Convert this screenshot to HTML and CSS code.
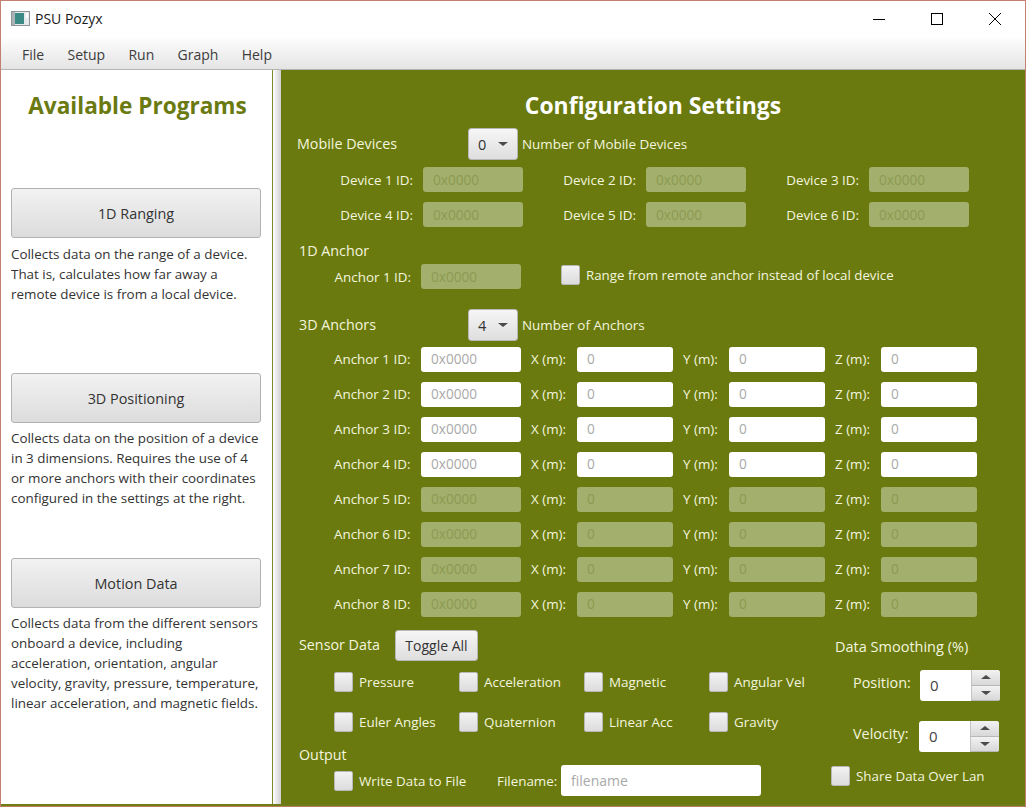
FILE: index.html
```html
<!DOCTYPE html>
<html lang="en">
<head>
<meta charset="UTF-8" />
<title>PSU Pozyx</title>
<link rel="stylesheet" href="styles.css">
</head>
<body>
  <div class="window">
    <div class="titlebar">
      <svg class="app-icon" width="19" height="15" viewBox="0 0 19 15">
        <rect x="0.5" y="0.5" width="18" height="14" fill="#e6e9eb" stroke="#8d9498"/>
        <rect x="1" y="1" width="3" height="13" fill="#aab2b6"/>
        <rect x="4" y="2" width="9" height="11" fill="#3c8a86"/>
        <rect x="15" y="2" width="2" height="5" fill="#fff"/>
      </svg>
      <span class="app-name">PSU Pozyx</span>
      <div class="win-buttons">
        <svg width="14" height="14" viewBox="0 0 14 14"><path d="M1 7.5H13" stroke="#000" fill="none"/></svg>
        <svg width="14" height="14" viewBox="0 0 14 14"><rect x="1.5" y="1.5" width="11" height="11" stroke="#000" fill="none"/></svg>
        <svg width="14" height="14" viewBox="0 0 14 14"><path d="M1 1L13 13M13 1L1 13" stroke="#000" fill="none"/></svg>
      </div>
    </div>
    <div class="menubar">
      <span>File</span>
      <span>Setup</span>
      <span>Run</span>
      <span>Graph</span>
      <span>Help</span>
    </div>

    <div class="content">
      <div class="sidebar">
        <h2>Available Programs</h2>

        <div class="program">
          <button class="program-btn">1D Ranging</button>
          <p>Collects data on the range of a device.<br>That is, calculates how far away a<br>remote device is from a local device.</p>
        </div>
        <div class="program">
          <button class="program-btn">3D Positioning</button>
          <p>Collects data on the position of a device<br>in 3 dimensions. Requires the use of 4<br>or more anchors with their coordinates<br>configured in the settings at the right.</p>
        </div>
        <div class="program">
          <button class="program-btn">Motion Data</button>
          <p>Collects data from the different sensors<br>onboard a device, including<br>acceleration, orientation, angular<br>velocity, gravity, pressure, temperature,<br>linear acceleration, and magnetic fields.</p>
        </div>
      </div>

      <div class="divider"></div>

      <div class="settings">
        <h1>Configuration Settings</h1>

        <div class="count-row">
          <span class="count-label mobile">Mobile Devices</span>
          <span class="combo">0<i class="arrow"></i></span>
          <span>Number of Mobile Devices</span>
        </div>

        <div class="device-grid">
          <div class="field"><label>Device 1 ID:</label><span class="input off">0x0000</span></div>
          <div class="field"><label>Device 2 ID:</label><span class="input off">0x0000</span></div>
          <div class="field"><label>Device 3 ID:</label><span class="input off">0x0000</span></div>
          <div class="field"><label>Device 4 ID:</label><span class="input off">0x0000</span></div>
          <div class="field"><label>Device 5 ID:</label><span class="input off">0x0000</span></div>
          <div class="field"><label>Device 6 ID:</label><span class="input off">0x0000</span></div>
        </div>

        <div class="heading anchor-1d">1D Anchor</div>
        <div class="anchor-1d-row">
          <div class="field"><label>Anchor 1 ID:</label><span class="input off">0x0000</span></div>
          <span class="check"><i class="box"></i>Range from remote anchor instead of local device</span>
        </div>

        <div class="count-row anchors-count">
          <span class="count-label">3D Anchors</span>
          <span class="combo">4<i class="arrow"></i></span>
          <span>Number of Anchors</span>
        </div>

        <div class="anchor-grid">
          <label>Anchor 1 ID:</label><span class="input">0x0000</span><label>X (m):</label><span class="input">0</span><label>Y (m):</label><span class="input">0</span><label>Z (m):</label><span class="input">0</span>
          <label>Anchor 2 ID:</label><span class="input">0x0000</span><label>X (m):</label><span class="input">0</span><label>Y (m):</label><span class="input">0</span><label>Z (m):</label><span class="input">0</span>
          <label>Anchor 3 ID:</label><span class="input">0x0000</span><label>X (m):</label><span class="input">0</span><label>Y (m):</label><span class="input">0</span><label>Z (m):</label><span class="input">0</span>
          <label>Anchor 4 ID:</label><span class="input">0x0000</span><label>X (m):</label><span class="input">0</span><label>Y (m):</label><span class="input">0</span><label>Z (m):</label><span class="input">0</span>
          <label>Anchor 5 ID:</label><span class="input off">0x0000</span><label>X (m):</label><span class="input off">0</span><label>Y (m):</label><span class="input off">0</span><label>Z (m):</label><span class="input off">0</span>
          <label>Anchor 6 ID:</label><span class="input off">0x0000</span><label>X (m):</label><span class="input off">0</span><label>Y (m):</label><span class="input off">0</span><label>Z (m):</label><span class="input off">0</span>
          <label>Anchor 7 ID:</label><span class="input off">0x0000</span><label>X (m):</label><span class="input off">0</span><label>Y (m):</label><span class="input off">0</span><label>Z (m):</label><span class="input off">0</span>
          <label>Anchor 8 ID:</label><span class="input off">0x0000</span><label>X (m):</label><span class="input off">0</span><label>Y (m):</label><span class="input off">0</span><label>Z (m):</label><span class="input off">0</span>
        </div>

        <div class="bottom">
          <div class="bottom-left">
            <div class="sensor-head">
              <span class="heading sensor-title">Sensor Data</span>
              <button class="toggle-btn">Toggle All</button>
            </div>
            <div class="sensor-grid">
              <span class="check"><i class="box"></i>Pressure</span>
              <span class="check"><i class="box"></i>Acceleration</span>
              <span class="check"><i class="box"></i>Magnetic</span>
              <span class="check"><i class="box"></i>Angular Vel</span>
              <span class="check"><i class="box"></i>Euler Angles</span>
              <span class="check"><i class="box"></i>Quaternion</span>
              <span class="check"><i class="box"></i>Linear Acc</span>
              <span class="check"><i class="box"></i>Gravity</span>
            </div>
            <div class="heading output-title">Output</div>
            <div class="output-row">
              <span class="check write-check"><i class="box"></i>Write Data to File</span>
              <label>Filename:</label>
              <span class="input filename">filename</span>
            </div>
          </div>

          <div class="bottom-right">
            <div class="smooth-title">Data Smoothing (%)</div>
            <div class="smooth-row position">
              <label>Position:</label>
              <span class="spinner">
                <span class="spin-value">0</span>
                <span class="spin-btns"><span><i class="up"></i></span><span><i class="arrow"></i></span></span>
              </span>
            </div>
            <div class="smooth-row velocity">
              <label>Velocity:</label>
              <span class="spinner">
                <span class="spin-value">0</span>
                <span class="spin-btns"><span><i class="up"></i></span><span><i class="arrow"></i></span></span>
              </span>
            </div>
            <span class="check share"><i class="box"></i>Share Data Over Lan</span>
          </div>
        </div>
      </div>
    </div>
  </div>
</body>
</html>
```

FILE: styles.css
```css
* {
  box-sizing: border-box;
}
body {
  margin: 0;
  font-family: "Open Sans", "Noto Sans", sans-serif;
  font-size: 13.4px;
  background: #fff;
}

.window {
  width: 1026px;
  height: 807px;
  border: 1px solid #c57f6e;
  border-bottom-color: #b5805a;
  display: flex;
  flex-direction: column;
  overflow: hidden;
}

.titlebar {
  height: 37px;
  flex: none;
  display: flex;
  align-items: center;
  background: #fff;
  padding: 0 0 2px 10px;
  color: #1a1a1a;
  font-size: 14px;
}
.app-icon {
  margin-right: 5px;
}
.win-buttons {
  margin-left: auto;
  display: flex;
  gap: 44px;
  padding-right: 23px;
}
.win-buttons svg {
  display: block;
}

.menubar {
  height: 32px;
  flex: none;
  display: flex;
  align-items: center;
  gap: 23.3px;
  padding: 2px 0 0 21px;
  background: linear-gradient(#fdfdfd, #e4e4e4);
  border-bottom: 1px solid #b4b4b4;
  color: #3c3c3c;
  font-size: 14px;
}

.content {
  flex: 1;
  display: flex;
  min-height: 0;
  border-bottom: 2px solid #6f7d18;
}

.sidebar {
  width: 271px;
  flex: none;
  background: #fff;
  padding: 0 10px;
  color: #333;
}
.sidebar h2 {
  margin: 20px 0 66px;
  padding-left: 2px;
  height: 32px;
  line-height: 32px;
  text-align: center;
  font-size: 22.6px;
  font-weight: 700;
  color: #6a7a10;
}
.program {
  height: 185px;
}
.program-btn {
  display: block;
  width: 250px;
  height: 50px;
  border: 1px solid #b2b2b2;
  border-radius: 3px;
  background: linear-gradient(#f2f2f2, #dcdcdc);
  color: #333;
  font-family: inherit;
  font-size: 14.4px;
}
.program p {
  margin: 6px 0 0;
  line-height: 20px;
  font-size: 13.4px;
}
.program + .program p {
  margin-top: 5px;
}

.divider {
  width: 9px;
  flex: none;
  border-left: 1px solid #7c8a2c;
  background: linear-gradient(90deg, #fff, #cfcfcf);
}

.settings {
  flex: 1;
  background: #6a7a0e;
  padding-left: 16px;
  color: #f3f5df;
}
.settings h1 {
  margin: 20px 0 6px;
  height: 32px;
  line-height: 32px;
  text-align: center;
  font-size: 22.9px;
  font-weight: 700;
  color: #fff;
  padding-right: 16px;
}

.count-row {
  display: flex;
  align-items: center;
  height: 32px;
}
.count-label {
  width: 171px;
  padding: 0 0 2px 2px;
  font-size: 14.3px;
}
.count-label.mobile {
  padding-left: 0;
}
.combo {
  width: 50px;
  height: 32px;
  margin-right: 4px;
  display: flex;
  align-items: center;
  justify-content: space-between;
  padding: 0 9px;
  border: 1px solid #b8b8b8;
  border-radius: 3px;
  background: linear-gradient(#f6f6f6, #dedede);
  color: #333;
  font-size: 14.5px;
}
.arrow {
  width: 0;
  height: 0;
  border-left: 5px solid transparent;
  border-right: 5px solid transparent;
  border-top: 4.5px solid #4a4a4a;
}
.up {
  width: 0;
  height: 0;
  border-left: 5px solid transparent;
  border-right: 5px solid transparent;
  border-bottom: 4.5px solid #4a4a4a;
}

.input {
  display: flex;
  align-items: center;
  height: 25px;
  padding: 0 0 1px 10px;
  background: #fff;
  border-radius: 3px;
  color: #a9a9a9;
  font-size: 13.6px;
}
.input.off {
  background: #a3af6c;
  color: #8c9a52;
}

.field {
  display: flex;
  align-items: center;
  gap: 10px;
}
.field label {
  text-align: right;
  white-space: nowrap;
}
.field .input {
  width: 100px;
}

.device-grid {
  display: grid;
  grid-template-columns: repeat(3, 183px);
  column-gap: 40px;
  row-gap: 10px;
  margin-top: 7px;
  padding-left: 43px;
}
.device-grid label {
  width: 73px;
}

.heading {
  font-size: 14.3px;
  line-height: 20px;
}
.anchor-1d {
  margin: 14px 0 3px;
  padding-left: 2px;
}
.anchor-1d-row {
  display: flex;
  align-items: flex-start;
  gap: 40px;
  padding-left: 37px;
}
.anchor-1d-row label {
  width: 77px;
}
.anchor-1d-row .check {
  margin-top: 1px;
  font-size: 13.3px;
}
.check {
  display: flex;
  align-items: center;
  white-space: nowrap;
}
.box {
  width: 19px;
  height: 20px;
  margin-right: 6px;
  flex: none;
  border: 1px solid #b8b8b8;
  border-radius: 2px;
  background: linear-gradient(#f2f2f2, #dcdcdc);
}

.anchors-count {
  margin-top: 20px;
}
.anchor-grid {
  display: grid;
  grid-template-columns: 124px 100px 56px 96px 56px 96px 56px 96px;
  row-gap: 10px;
  margin-top: 6px;
  align-items: center;
}
.anchor-grid label {
  white-space: nowrap;
  padding: 0 0 2px 10px;
}
.anchor-grid label:nth-child(8n+1) {
  padding-left: 37px;
}
.anchor-grid .input {
  padding-bottom: 2px;
}

.bottom {
  display: flex;
  margin-top: 13px;
}
.bottom-left {
  width: 534px;
  flex: none;
}
.sensor-head {
  display: flex;
  align-items: center;
  height: 31px;
}
.sensor-title {
  width: 98px;
  padding: 0 0 2px 2px;
}
.toggle-btn {
  width: 83px;
  height: 31px;
  border: 1px solid #b8b8b8;
  border-radius: 3px;
  background: linear-gradient(#f6f6f6, #dedede);
  color: #333;
  font-family: inherit;
  font-size: 14px;
  padding: 0;
}
.sensor-grid {
  display: grid;
  grid-template-columns: repeat(4, 125px);
  grid-auto-rows: 20px;
  row-gap: 20px;
  margin-top: 11px;
  padding-left: 37px;
}
.output-title {
  margin-top: 13px;
  padding-left: 2px;
}
.output-row {
  display: flex;
  align-items: center;
  height: 31px;
  padding-left: 37px;
}
.write-check {
  width: 163px;
}
.output-row label {
  width: 59px;
  margin-right: 5px;
  white-space: nowrap;
}
.filename {
  width: 200px;
  height: 31px;
  font-size: 14px;
}

.bottom-right {
  padding-top: 7px;
}
.smooth-title {
  font-size: 14.5px;
  line-height: 20px;
  padding-left: 4px;
}
.smooth-row {
  display: flex;
  align-items: center;
  font-size: 14.4px;
}
.smooth-row label {
  width: 67px;
  padding-bottom: 7px;
}
.smooth-row.position {
  margin-top: 13px;
  padding-left: 22px;
}
.smooth-row.velocity {
  margin-top: 20px;
  padding-left: 22px;
}
.smooth-row.velocity label {
  width: 66px;
}
.spinner {
  width: 80px;
  height: 31px;
  display: flex;
  background: #fff;
  border-radius: 3px;
  overflow: hidden;
  color: #444;
  font-size: 15px;
}
.spin-value {
  flex: 1;
  padding-left: 10px;
  line-height: 31px;
}
.spin-btns {
  width: 29px;
  display: flex;
  flex-direction: column;
}
.spin-btns span {
  flex: 1;
  display: flex;
  align-items: center;
  justify-content: center;
  background: linear-gradient(#f2f2f2, #d8d8d8);
  border-left: 1px solid #c4c4c4;
  border-bottom: 1px solid #b8b8b8;
}
.share {
  margin-top: 14px;
}
```
